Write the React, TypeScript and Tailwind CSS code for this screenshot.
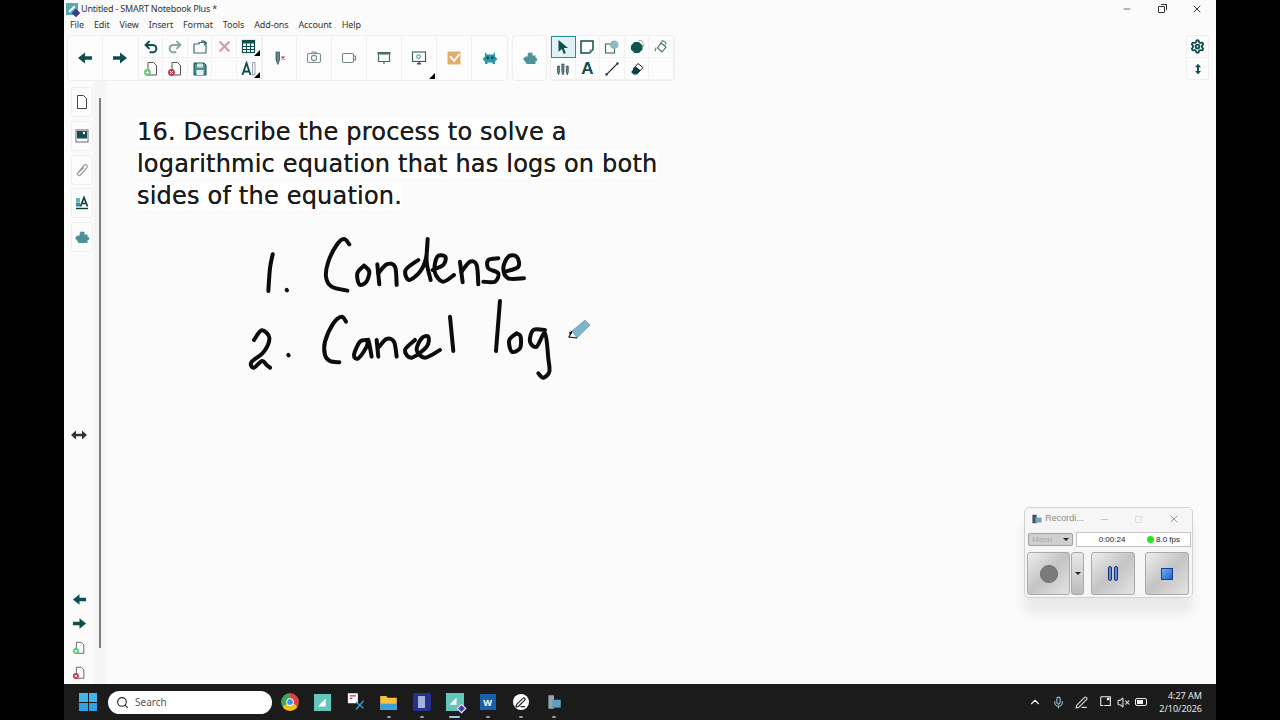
import type { ReactNode } from 'react';
import { ChevronUp, Mic, PenLine, Search, Undo2, Redo2, X, Minus, Settings, VolumeX } from 'lucide-react';

const teal = '#0d4f4c';

// catmull-rom through the traced points
const smooth = (pts: number[][]) => {
  if (pts.length === 2) return `M${pts[0][0]} ${pts[0][1]}L${pts[1][0]} ${pts[1][1]}`;
  let d = `M${pts[0][0]} ${pts[0][1]}`;
  for (let i = 0; i < pts.length - 1; i++) {
    const p0 = pts[Math.max(i - 1, 0)];
    const p1 = pts[i];
    const p2 = pts[i + 1];
    const p3 = pts[Math.min(i + 2, pts.length - 1)];
    const c1x = p1[0] + (p2[0] - p0[0]) / 6;
    const c1y = p1[1] + (p2[1] - p0[1]) / 6;
    const c2x = p2[0] - (p3[0] - p1[0]) / 6;
    const c2y = p2[1] - (p3[1] - p1[1]) / 6;
    d += `C${c1x} ${c1y} ${c2x} ${c2y} ${p2[0]} ${p2[1]}`;
  }
  return d;
};

// pen strokes, traced off the board
const ink: number[][][] = [
  [[98, 88], [90, 130], [85, 198]],
  [[140, 195], [141, 196]],
  [[328, 58], [312, 42], [290, 60], [265, 110], [258, 155], [275, 185], [322, 197]],
  [[372, 122], [352, 145], [358, 178], [378, 172], [388, 140], [372, 122]],
  [[412, 118], [418, 178]],
  [[415, 145], [440, 118], [465, 125], [470, 180]],
  [[535, 105], [497, 135], [507, 165], [540, 140], [558, 100], [563, 42], [560, 110], [572, 165]],
  [[578, 135], [610, 120], [616, 95], [592, 95], [584, 140], [608, 170], [642, 150]],
  [[660, 110], [668, 172]],
  [[665, 140], [690, 110], [710, 120], [715, 178]],
  [[775, 100], [745, 105], [745, 130], [775, 145], [765, 170], [730, 170]],
  [[795, 140], [835, 125], [830, 95], [805, 95], [790, 130], [805, 160], [852, 160]],
  [[42, 345], [65, 316], [88, 338], [72, 380], [34, 412], [42, 428], [66, 408], [80, 420], [90, 428]],
  [[145, 390], [146, 391]],
  [[318, 290], [305, 275], [280, 295], [255, 350], [255, 390], [270, 408], [298, 412]],
  [[385, 345], [360, 350], [342, 390], [355, 400], [380, 365], [385, 345], [395, 395]],
  [[410, 345], [415, 395]],
  [[415, 368], [440, 342], [462, 350], [470, 395]],
  [[525, 345], [495, 375], [515, 398], [560, 365], [565, 335], [545, 340], [530, 375], [555, 398], [600, 375]],
  [[630, 275], [640, 378]],
  [[780, 228], [768, 378]],
  [[830, 325], [808, 345], [815, 380], [840, 370], [842, 335], [830, 325]],
  [[915, 315], [880, 315], [870, 350], [890, 365], [915, 325], [925, 400], [928, 440], [910, 458], [895, 445]],
];

const Svg = ({ size = 16, children }: { size?: number; children: ReactNode }) => (
  <svg width={size} height={size} viewBox="0 0 16 16" fill="none">
    {children}
  </svg>
);

const ArrowLeft = () => (
  <Svg>
    <path d="M1 8 8 2.5V6.2H15V9.8H8V13.5Z" fill={teal} />
  </Svg>
);
const ArrowRight = () => (
  <Svg>
    <path d="M15 8 8 2.5V6.2H1V9.8H8V13.5Z" fill={teal} />
  </Svg>
);
const PageAdd = ({ bad = false, size = 16 }: { bad?: boolean; size?: number }) => (
  <Svg size={size}>
    <path d="M5 1.5H10.5L13.5 4.5V14H5Z" fill="#fff" stroke="#555" strokeWidth="1" />
    <circle cx="4.5" cy="11.5" r="3.4" fill={bad ? '#c2334f' : '#5fc56f'} />
    <path d={bad ? 'M3 10 6 13M6 10 3 13' : 'M2.7 11.5H6.3M4.5 9.7V13.3'} stroke="#fff" strokeWidth="1" />
  </Svg>
);
const Puzzle = () => (
  <Svg>
    <path d="M1 9 3.5 6.5H5.8C5 3.5 7 1.5 8.3 3 10 1.5 11.5 3.5 10.2 5.5H13.5V7.8C15.8 7.5 15.8 11.5 13.5 11.2V14H4.5L3.5 12 1 9Z" fill="#4f9296" />
  </Svg>
);

const Corner = () => (
  <span className="absolute right-[1px] bottom-[1px] w-0 h-0 border-l-[6px] border-l-transparent border-b-[6px] border-b-black" />
);

const Cell = ({ w, children, last }: { w: string; children?: ReactNode; last?: boolean }) => (
  <div className={`relative flex items-center justify-center ${w} ${last ? '' : 'border-r border-[#efefef]'}`}>{children}</div>
);

const smallIcons: ReactNode[] = [
  <Undo2 size={16} strokeWidth={3} color={teal} />,
  <Redo2 size={16} strokeWidth={3} color="#8aa5a8" />,
  <Svg>
    <path d="M2 5H7V3.5H14V14H2Z" stroke="#4b6a6c" strokeWidth="1.2" />
    <path d="M9 2H12L14 4 12 6" stroke={teal} strokeWidth="1.2" />
  </Svg>,
  <X size={17} strokeWidth={3.2} color="#d79ab0" />,
  <>
    <Svg>
      <rect x="1.5" y="1.5" width="12" height="12" fill="#fff" stroke={teal} strokeWidth="1.2" />
      <rect x="1.5" y="1.5" width="12" height="3" fill={teal} />
      <path d="M1.5 7.5H13.5M1.5 10.5H13.5M5.5 4.5V13.5M9.5 4.5V13.5" stroke={teal} strokeWidth="1" />
    </Svg>
    <Corner />
  </>,
  <PageAdd />,
  <PageAdd bad />,
  <Svg>
    <path d="M2 2H12L14 4V14H2Z" fill="#4f9296" stroke={teal} strokeWidth="1" />
    <rect x="5" y="2.5" width="6" height="4" fill="#cfe3e3" />
    <rect x="4.5" y="9" width="7" height="5" fill="#e7f0f0" />
  </Svg>,
  null,
  <>
    <Svg>
      <path d="M1.5 14 5.5 2 9.5 14M3 10.5H8" stroke={teal} strokeWidth="1.8" />
      <path d="M11.5 1.5H14V14H11.5Z" stroke="#88a" strokeWidth=".8" />
    </Svg>
    <Corner />
  </>,
];

const wideIcons: ReactNode[] = [
  <Svg>
    <path d="M4 2H7.5V10L5.8 14.5 4 10Z" fill="#5d8a90" stroke="#345" strokeWidth=".7" />
    <path d="M9.5 6.5 12.5 9.5M12.5 6.5 9.5 9.5" stroke="#c2334f" strokeWidth="1.1" />
  </Svg>,
  <Svg>
    <rect x="1.5" y="3.5" width="13" height="9" rx="1.5" stroke="#7b8f90" strokeWidth="1.1" />
    <circle cx="8" cy="8" r="2.6" stroke="#7b8f90" strokeWidth="1.1" />
    <path d="M5 3.5 6 2H10L11 3.5" stroke="#7b8f90" strokeWidth="1" />
  </Svg>,
  <Svg>
    <rect x="1.5" y="3.5" width="11" height="9" rx="1.5" stroke="#6f8788" strokeWidth="1.1" />
    <path d="M13 6H14.5V10H13" stroke="#6f8788" strokeWidth="1.1" />
  </Svg>,
  <Svg>
    <rect x="1.5" y="2" width="13" height="2.5" fill="#4a6b6c" />
    <path d="M2.5 4.5V11.5H13.5V4.5M8 11.5V14" stroke="#4a6b6c" strokeWidth="1.2" />
  </Svg>,
  <>
    <Svg>
      <rect x="1.5" y="2" width="13" height="9.5" stroke="#3c5a5c" strokeWidth="1.1" />
      <circle cx="7.5" cy="6.5" r="1.8" stroke="#3c7a80" strokeWidth="1" />
      <path d="M6 13.8H10M8 11.5V13.8" stroke="#3c5a5c" strokeWidth="1.4" />
    </Svg>
    <Corner />
  </>,
  <Svg>
    <rect x="1.5" y="1.5" width="13" height="13" rx="1" fill="#e2ad6c" />
    <path d="M4 6 8 11 13.5 4" stroke="#fff" strokeWidth="2" />
  </Svg>,
  <Svg>
    <path d="M3 2 5 4.5H11L13 2V6.5L15.5 9 13 11.5V14H10.5V12.5H5.5V14H3V11.5L0.5 9 3 6.5Z" fill="#2b97ad" />
    <circle cx="5.7" cy="7.8" r="1.4" fill={teal} />
    <circle cx="10.3" cy="7.8" r="1.4" fill={teal} />
  </Svg>,
];

const toolIcons: ReactNode[] = [
  <Svg>
    <path d="M3.5 1 13 9H8.8L10.8 14 8.8 15 6.8 10 3.5 12.8Z" fill={teal} />
  </Svg>,
  <Svg>
    <path d="M2 2H14V10.5L10.5 14H2Z" fill="#fff" stroke={teal} strokeWidth="1.5" />
    <path d="M10.5 14V10.5H14Z" fill="#888" />
  </Svg>,
  <Svg>
    <rect x="1.5" y="5" width="9" height="9" stroke="#4a6465" strokeWidth="1.1" />
    <circle cx="10.2" cy="5.7" r="4.3" fill="#8bbcc0" />
  </Svg>,
  <Svg>
    <path d="M9.5 1.5 12.5 1.5 15 6 13.5 8" stroke="#aaa" strokeWidth="1" />
    <path d="M5.5 3H10L13.5 6.5V10.5L10 14H5.5L2 10.5V6.5Z" fill="#0f5552" />
  </Svg>,
  <Svg>
    <path d="M8 4 13 8 9 13 4.5 9Z" stroke="#4a6465" strokeWidth="1.1" fill="#fff" />
    <path d="M8 4 9.5 1.5 13 3.5 12 6" stroke="#4f9296" strokeWidth="1.1" />
    <path d="M3 8C1.5 10 1 12 2.3 12.5 3.6 12 3.4 10 3 8Z" fill="#4f9296" />
  </Svg>,
  <Svg>
    <path d="M2.5 5H4.5V11L3.5 14 2.5 11ZM6.8 3H9V11L8 14 6.8 11ZM11.3 5H13.3V11L12.3 14 11.3 11Z" fill="#5d8a90" stroke="#234" strokeWidth=".6" />
  </Svg>,
  <span className="font-['Liberation_Sans',sans-serif] font-bold text-[17px] leading-none text-[#0d4f4c]">A</span>,
  <Svg>
    <path d="M2 14 14 2" stroke="#333" strokeWidth="1.1" />
    <circle cx="2.5" cy="13.5" r="1.2" fill={teal} />
    <circle cx="13.5" cy="2.5" r="1.2" fill={teal} />
  </Svg>,
  <Svg>
    <path d="M9 2.5 14 6.5 9 12 4 8Z" fill="#fff" stroke="#223" strokeWidth="1" />
    <path d="M6.5 5.2 11.5 9.2 8 13.5H4.5L2.2 11Z" fill="#0f3f3f" />
  </Svg>,
  null,
];

const SideTile = ({ children }: { children: ReactNode }) => (
  <div className="w-[22px] h-[30px] flex items-center justify-center border border-[#f0f0f0] rounded-[3px] bg-[#fcfcfc]">{children}</div>
);

const TaskIcon = ({ children, dot, active }: { children: ReactNode; dot?: boolean; active?: boolean }) => (
  <div className="relative w-[33px] h-[36px] flex items-center justify-center">
    {children}
    {dot && <span className={`absolute bottom-[2px] h-[2px] rounded-full ${active ? 'w-[11px] bg-[#9fc6e8]' : 'w-[4px] bg-[#9a9a9a]'}`} />}
  </div>
);

const RecButton = ({ w, children }: { w: string; children: ReactNode }) => (
  <div className={`${w} h-[43px] flex items-center justify-center rounded-[3px] border border-[#a9a9a9] bg-gradient-to-br from-[#eeeeee] via-[#c4c4c4] to-[#e4e4e4]`}>{children}</div>
);

const RecorderWindow = () => (
  <div className="absolute left-[918px] top-[426px] w-[169px] h-[91px] rounded-[5px] bg-[#f6f6f6] border border-[#d2d2d2] shadow-[0_16px_12px_rgba(0,0,0,0.07)] flex flex-col font-['Liberation_Sans',sans-serif]">
    <div className="h-[24px] flex items-center pl-[6px] pb-[2px]">
      <Svg size={12}>
        <rect x="2" y="2" width="6" height="12" fill="#43525e" />
        <rect x="6" y="6" width="9" height="7" fill="#6fa3bd" />
      </Svg>
      <span className="ml-[3px] w-[49px] text-[9px] text-[#8a8a8a]">Recordi...</span>
      <div className="flex w-[105px] items-center justify-between pl-[7px] pr-[12px]">
        <Minus size={11} color="#c4c4c4" />
        <span className="w-[7px] h-[7px] border border-[#dedede] rounded-[1px]" />
        <X size={12} color="#9a9a9a" />
      </div>
    </div>
    <div className="h-[15px] flex items-center pl-[3px] pr-[1px] gap-[3px]">
      <div className="w-[45px] h-[13px] rounded-[2px] border border-[#a0a0a0] bg-[#d0d0d0] flex items-center justify-between px-[3px]">
        <span className="text-[8px] leading-none text-[#a9a9a9]">Menu</span>
        <span className="w-0 h-0 border-x-[3px] border-x-transparent border-t-[3px] border-t-[#222]" />
      </div>
      <div className="flex-1 h-[15px] bg-white border border-[#c4c4c4] flex items-center text-[8px] text-[#222]">
        <span className="w-[70px] text-center">0:00:24</span>
        <span className="w-[7px] h-[7px] rounded-full bg-[#22e622] mr-[2px]" />
        <span>8.0 fps</span>
      </div>
    </div>
    <div className="flex items-center pl-[2px] pt-[5px]">
      <RecButton w="w-[43px]">
        <span className="w-[18px] h-[18px] rounded-full bg-[#7b7b7b] border border-[#6a6a6a]" />
      </RecButton>
      <div className="ml-[1px] w-[13px] h-[43px] flex items-center justify-center rounded-[3px] border border-[#a9a9a9] bg-gradient-to-b from-[#e8e8e8] to-[#bcbcbc]">
        <span className="w-0 h-0 border-x-[3px] border-x-transparent border-t-[3px] border-t-[#222]" />
      </div>
      <div className="ml-[7px]">
        <RecButton w="w-[44px]">
          <span className="flex gap-[2px]">
            <span className="w-[4px] h-[15px] rounded-[2px] bg-[#5d8fe0] border border-[#1a2f6a]" />
            <span className="w-[4px] h-[15px] rounded-[2px] bg-[#5d8fe0] border border-[#1a2f6a]" />
          </span>
        </RecButton>
      </div>
      <div className="ml-[10px]">
        <RecButton w="w-[44px]">
          <span className="w-[12px] h-[12px] bg-gradient-to-br from-[#6fb0f5] to-[#1b5fd0] border border-[#1a3f8a]" />
        </RecButton>
      </div>
    </div>
  </div>
);

export default function App() {
  return (
    <div className="w-[1280px] h-[720px] bg-black flex justify-center overflow-hidden font-['Noto_Sans',sans-serif]">
      <div className="w-[1152px] h-[720px] bg-[#fbfbfb] flex flex-col">
        {/* title bar */}
        <div className="h-[17px] flex items-center shrink-0">
          <div className="ml-[2px] w-[12px] h-[12px] bg-[#5aa9b0] relative overflow-visible">
            <span className="absolute left-[2px] top-[5px] w-[8px] h-[2px] -rotate-45 bg-white" />
            <span className="absolute right-[-1px] bottom-[-1px] w-[6px] h-[6px] rotate-45 bg-[#3a3a8c]" />
          </div>
          <span className="ml-[3px] text-[9px] tracking-[-0.2px] text-[#333]">Untitled - SMART Notebook Plus *</span>
          <div className="ml-auto flex items-center mr-[2px]">
            <div className="w-[35px] flex justify-center"><Minus size={10} color="#555" /></div>
            <div className="w-[35px] flex justify-center">
              <span className="relative w-[7px] h-[7px] border border-[#333] rounded-[1px] bg-[#fbfbfb] mt-[1px]">
                <span className="absolute -top-[2.5px] -right-[2.5px] w-[6px] h-[6px] border-t border-r border-[#333]" />
              </span>
            </div>
            <div className="w-[35px] flex justify-center"><X size={12} color="#333" /></div>
          </div>
        </div>

        {/* menu */}
        <div className="h-[16px] flex items-center pl-[6px] gap-[10px] text-[9px] tracking-[-0.12px] text-[#333] shrink-0">
          {['File', 'Edit', 'View', 'Insert', 'Format', 'Tools', 'Add-ons', 'Account', 'Help'].map((m) => (
            <span key={m}>{m}</span>
          ))}
        </div>

        {/* toolbar */}
        <div className="h-[46px] mt-[2px] pl-[3px] flex shrink-0">
          <div className="flex h-[46px] w-[441px] border border-[#efefef] rounded-[4px] bg-[#fcfcfc]">
            <Cell w="w-[35px]"><ArrowLeft /></Cell>
            <Cell w="w-[36px]"><ArrowRight /></Cell>
            <div className="grid grid-cols-5 grid-rows-2 w-[124px] border-r border-[#efefef]">
              {smallIcons.map((icon, i) => (
                <div key={i} className="relative flex items-center justify-center border-r border-b border-[#f2f2f2]">{icon}</div>
              ))}
            </div>
            {wideIcons.map((icon, i) => (
              <Cell key={i} w="w-[35px]" last={i === wideIcons.length - 1}>{icon}</Cell>
            ))}
          </div>
          <div className="ml-[4px] w-[35px] h-[46px] flex items-center justify-center border border-[#efefef] rounded-[4px] bg-[#fcfcfc]"><Puzzle /></div>
          <div className="ml-[3px] w-[125px] h-[46px] grid grid-cols-5 grid-rows-2 border border-[#efefef] rounded-[4px] bg-[#fcfcfc]">
            {toolIcons.map((icon, i) => (
              <div key={i} className={`flex items-center justify-center ${i === 0 ? 'border border-[#2a8f9a] bg-[#e0f2f3]' : 'border-r border-b border-[#f2f2f2]'}`}>{icon}</div>
            ))}
          </div>
          <div className="ml-auto mr-[7px] w-[23px] h-[45px] flex flex-col border border-[#efefef] rounded-[3px] bg-[#fcfcfc]">
            <div className="flex-1 flex items-center justify-center border-b border-[#efefef]"><Settings size={15} strokeWidth={3} color={teal} /></div>
            <div className="flex-1 flex items-center justify-center">
              <Svg size={12}><path d="M8 1 12 5.5H9.3V10.5H12L8 15 4 10.5H6.7V5.5H4Z" fill={teal} /></Svg>
            </div>
          </div>
        </div>

        {/* board */}
        <div className="flex-1 flex min-h-0">
          <div className="w-[30px] flex flex-col pt-[6px]">
            <div className="flex flex-col gap-[3.75px] pl-[7px]">
              <SideTile><Svg><path d="M3.5 1.5H9.5L12.5 4.5V14.5H3.5Z" fill="#fff" stroke="#444" strokeWidth="1" /></Svg></SideTile>
              <SideTile>
                <Svg>
                  <rect x="2" y="2" width="12" height="12" fill="#fff" stroke="#667" strokeWidth="1" />
                  <rect x="3" y="3" width="10" height="7.5" fill="#0f4f4e" />
                  <circle cx="10" cy="5" r="1.2" fill="#fff" />
                </Svg>
              </SideTile>
              <SideTile>
                <Svg><path d="M3.5 11.5 10 3.5C11.8 1.5 14.5 4 12.8 5.8L6.5 13C5 14.5 2.5 13 3.8 11L9.8 5.5" stroke="#999" strokeWidth="1.2" /></Svg>
              </SideTile>
              <SideTile>
                <Svg>
                  <rect x="2" y="3" width="4" height="4" fill="#6bb8a8" />
                  <rect x="2" y="7.5" width="4" height="4" fill="#2e8fb0" />
                  <path d="M6.5 11.5 10 2.5 13.5 11.5M8 8.5H12" stroke="#0f3f3f" strokeWidth="1.7" />
                  <path d="M2 13.5H14" stroke="#0f3f3f" strokeWidth="1.4" />
                </Svg>
              </SideTile>
              <SideTile><Puzzle /></SideTile>
            </div>
            <div className="mt-[175px] flex justify-center">
              <Svg><path d="M0 8 5 3.5V6.8H11V3.5L16 8 11 12.5V9.2H5V12.5Z" fill="#333" /></Svg>
            </div>
            <div className="mt-auto -mb-[1px] flex flex-col items-center">
              <div className="h-[24.5px] flex items-center"><Svg size={15}><path d="M1 8 8 2.5V6.2H15V9.8H8V13.5Z" fill={teal} /></Svg></div>
              <div className="h-[24.5px] flex items-center"><Svg size={15}><path d="M15 8 8 2.5V6.2H1V9.8H8V13.5Z" fill={teal} /></Svg></div>
              <div className="h-[24.5px] flex items-center"><PageAdd size={14} /></div>
              <div className="h-[24.5px] flex items-center"><PageAdd bad size={14} /></div>
            </div>
          </div>
          <div className="w-[12px] bg-[#f5f5f5] pt-[17px] pb-[36px] flex justify-center">
            <div className="w-[2px] h-full bg-[#7d7d7d]" />
          </div>

          <div className="relative flex-1 bg-[#fbfbfb] pl-[31px] pt-[35px]">
            <p className="font-['DejaVu_Sans',sans-serif] text-[24px] leading-[32px] tracking-[0.2px] text-[#1c1c1c] [text-shadow:0_0_0.6px_#1c1c1c]">
              <span className="bg-white">16. Describe the process to solve a</span>
              <br />
              <span className="bg-white">logarithmic equation that has logs on both</span>
              <br />
              <span className="bg-white">sides of the equation.</span>
            </p>
            <svg className="absolute left-0 top-0" width="1110" height="603" viewBox="106 81 1110 603" fill="none">
              <g transform="translate(240 225) scale(0.3333)" stroke="#0c0c0c" strokeWidth="12" strokeLinecap="round" strokeLinejoin="round">
                {ink.map((s, i) => (
                  <path key={i} d={smooth(s)} />
                ))}
              </g>
              <path d="M572 331 585 320 590 325 577 338Z" fill="#7cb4cc" stroke="#5d8ea3" strokeWidth=".6" />
              <path d="M572 331 569 337 577 338" stroke="#111" strokeWidth="1.2" />
              <circle cx="570.5" cy="333" r="1.3" fill="#111" />
            </svg>
            <RecorderWindow />
          </div>
        </div>

        {/* taskbar */}
        <div className="h-[36px] bg-[#1b1b1b] flex items-center shrink-0 text-white">
          <div className="ml-[15px] w-[18px] h-[18px] grid grid-cols-2 grid-rows-2 gap-[1px]">
            <span className="bg-[#3fb4ee]" />
            <span className="bg-[#3fb4ee]" />
            <span className="bg-[#2fa2e6]" />
            <span className="bg-[#2fa2e6]" />
          </div>
          <div className="ml-[11px] w-[164px] h-[23px] rounded-full bg-white flex items-center pl-[8px]">
            <Search size={13} strokeWidth={2} color="#222" />
            <span className="ml-[6px] text-[10px] text-[#555]">Search</span>
          </div>
          <div className="ml-[1px] flex">
            <TaskIcon>
              <span className="w-[18px] h-[18px] rounded-full bg-[conic-gradient(#e0433a_0_33%,#f3c21a_33%_66%,#3aa757_66%_100%)] flex items-center justify-center">
                <span className="w-[8px] h-[8px] rounded-full bg-[#4a8fe7] border border-white" />
              </span>
            </TaskIcon>
            <TaskIcon>
              <span className="w-[17px] h-[17px] bg-[#63c6bd] flex items-center justify-center">
                <Svg size={13}><path d="M3 12 12 3V13H3Z" fill="#fff" /></Svg>
              </span>
            </TaskIcon>
            <TaskIcon>
              <Svg size={20}>
                <rect x="1.5" y="1" width="8" height="8" fill="#fff" />
                <path d="M3 3H8M3 5H5" stroke="#c2334f" strokeWidth="1" />
                <path d="M8 8 14 13M14 7 8 14" stroke="#39a0d6" strokeWidth="1" />
              </Svg>
            </TaskIcon>
            <TaskIcon dot>
              <Svg size={19}>
                <path d="M1 2.5H6L7.5 4H15V14H1Z" fill="#f5c242" />
                <rect x="1" y="9" width="14" height="5" fill="#3aa0d8" />
              </Svg>
            </TaskIcon>
            <TaskIcon dot>
              <span className="w-[18px] h-[18px] rounded-[2px] bg-[#27308a] flex items-center justify-center">
                <span className="w-[7px] h-[12px] bg-[#9fb3dd]" />
              </span>
            </TaskIcon>
            <TaskIcon dot active>
              <span className="relative w-[18px] h-[18px] bg-[#63c6bd] flex items-center justify-center">
                <Svg size={12}><path d="M2 10 10 2V12H2Z" fill="#fff" /></Svg>
                <span className="absolute -right-[1px] -bottom-[1px] w-[7px] h-[7px] rotate-45 bg-[#4a3fa8] border border-white" />
              </span>
            </TaskIcon>
            <TaskIcon dot>
              <span className="w-[16px] h-[16px] bg-[#1b5fa8] flex items-center justify-center text-[9px] font-bold leading-none text-white">W</span>
            </TaskIcon>
            <TaskIcon dot>
              <span className="w-[16px] h-[16px] rounded-full bg-white flex items-center justify-center">
                <PenLine size={11} strokeWidth={2.5} color="#222" />
              </span>
            </TaskIcon>
            <TaskIcon dot>
              <Svg size={18}>
                <rect x="3" y="2" width="5" height="12" fill="#9aa5ac" />
                <rect x="6" y="6" width="8" height="7" fill="#5fa0c0" />
              </Svg>
            </TaskIcon>
          </div>

          <div className="ml-auto flex items-center">
            <ChevronUp size={14} strokeWidth={2} color="#eee" />
            <div className="ml-[10px]"><Mic size={13} color="#8ec9d6" /></div>
            <div className="ml-[10px]"><PenLine size={13} color="#ddd" /></div>
            <div className="ml-[11px]">
              <Svg size={14}>
                <path d="M2 2H13V12H6" stroke="#eee" strokeWidth="1.2" />
                <path d="M2 2V12H5" stroke="#eee" strokeWidth="1.2" />
                <rect x="9" y="3" width="3" height="3" fill="#eee" />
              </Svg>
            </div>
            <div className="ml-[4px]"><VolumeX size={13} color="#ddd" /></div>
            <div className="ml-[5px] w-[12px] h-[8px] border border-[#eee] rounded-[2px] p-[1px]">
              <span className="block w-[6px] h-full bg-[#eee]" />
            </div>
            <div className="ml-[9px] mr-[14px] w-[46px] text-right text-[9px] leading-[13px] text-[#e8e8e8]">
              <div>4:27 AM</div>
              <div>2/10/2026</div>
            </div>
          </div>
        </div>
      </div>
    </div>
  );
}
